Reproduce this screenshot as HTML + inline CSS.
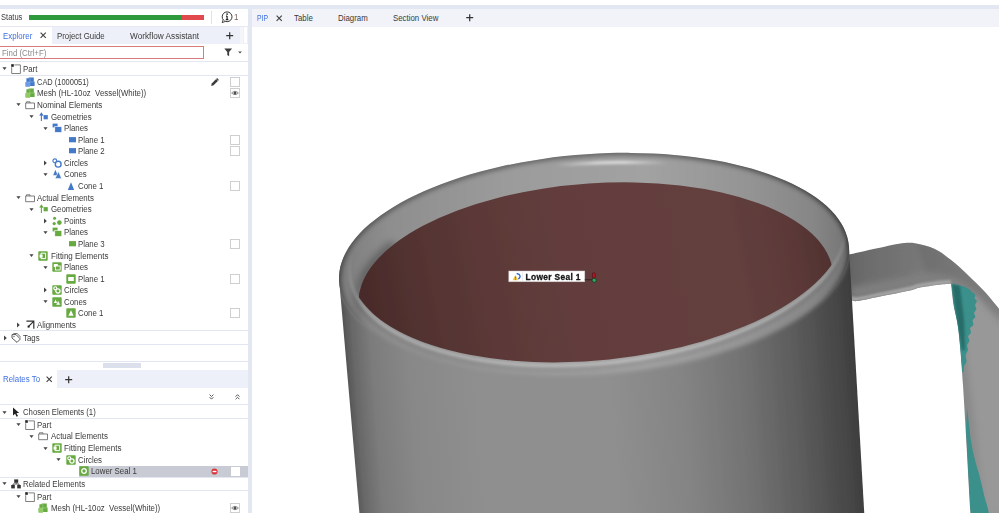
<!DOCTYPE html>
<html><head><meta charset="utf-8"><title>Inspect</title>
<style>
html,body{margin:0;padding:0;}
body{width:999px;height:513px;overflow:hidden;background:#fff;position:relative;
 font-family:"Liberation Sans",sans-serif;font-size:8.6px;color:#333;}
.abs{position:absolute;}
.t{position:absolute;white-space:nowrap;line-height:10.6px;height:10.6px;color:#3a3a3a;font-size:8.5px;transform:scaleX(0.925);transform-origin:0 50%;}
.hl{position:absolute;height:1.2px;background:#e2e6f0;}
.cb{position:absolute;width:8px;height:8px;border:1px solid #cfcfcf;background:#fff;box-sizing:content-box;}
svg{position:absolute;overflow:visible;}
#soft{filter:blur(0.35px);}
</style></head><body>
<svg width="999" height="513" viewBox="0 0 999 513" style="left:0;top:0">
<defs>
 <linearGradient id="gBody" gradientUnits="userSpaceOnUse" x1="340" y1="0" x2="862" y2="0" gradientTransform="matrix(1 0 0.072 1 -19.5 0)">
  <stop offset="0" stop-color="#565656"/><stop offset="0.015" stop-color="#686868"/>
  <stop offset="0.05" stop-color="#7c7c7c"/><stop offset="0.12" stop-color="#888"/>
  <stop offset="0.25" stop-color="#8f8f8f"/><stop offset="0.50" stop-color="#8f8f8f"/>
  <stop offset="0.64" stop-color="#848484"/><stop offset="0.76" stop-color="#727272"/>
  <stop offset="0.86" stop-color="#5c5c5c"/><stop offset="0.95" stop-color="#454545"/>
  <stop offset="1" stop-color="#363636"/>
 </linearGradient>
 <linearGradient id="gRim" gradientUnits="userSpaceOnUse" x1="338" y1="0" x2="850" y2="0">
  <stop offset="0" stop-color="#7c7c7c"/><stop offset="0.1" stop-color="#8e8e8e"/>
  <stop offset="0.35" stop-color="#9c9c9c"/><stop offset="0.6" stop-color="#a2a2a2"/>
  <stop offset="0.8" stop-color="#949494"/><stop offset="0.93" stop-color="#868686"/>
  <stop offset="1" stop-color="#747474"/>
 </linearGradient>
 <linearGradient id="gBrown" gradientUnits="userSpaceOnUse" x1="358" y1="300" x2="832" y2="240">
  <stop offset="0" stop-color="#482a29"/><stop offset="0.18" stop-color="#573534"/>
  <stop offset="0.45" stop-color="#633e3d"/><stop offset="0.8" stop-color="#633f3e"/>
  <stop offset="0.93" stop-color="#5a3837"/><stop offset="1" stop-color="#4f302f"/>
 </linearGradient>
 <linearGradient id="gHi" gradientUnits="userSpaceOnUse" x1="556" y1="0" x2="668" y2="0">
  <stop offset="0" stop-color="#fff" stop-opacity="0"/><stop offset="0.35" stop-color="#fff" stop-opacity="0.7"/>
  <stop offset="0.6" stop-color="#fff" stop-opacity="0.75"/><stop offset="1" stop-color="#fff" stop-opacity="0"/>
 </linearGradient>
 <linearGradient id="gHandle" gradientUnits="userSpaceOnUse" x1="850" y1="0" x2="999" y2="0">
  <stop offset="0" stop-color="#646464"/><stop offset="0.1" stop-color="#6c6c6c"/><stop offset="0.4" stop-color="#757575"/>
  <stop offset="0.7" stop-color="#868686"/><stop offset="1" stop-color="#949494"/>
 </linearGradient>
 <clipPath id="cBody"><path d="M339.0 278.5 L849.1 249.7 L864.3 514 L359.5 514 Z"/><path d="M849.0 246.8 C849.2 250.0 849.1 253.2 848.6 256.5 C848.2 259.7 847.5 262.9 846.4 266.2 C845.3 269.4 843.9 272.6 842.2 275.9 C840.5 279.1 838.5 282.3 836.1 285.4 C833.8 288.6 831.2 291.8 828.2 294.9 C825.3 298.0 822.1 301.1 818.5 304.1 C815.0 307.1 811.2 310.1 807.1 313.0 C803.1 315.9 798.7 318.7 794.1 321.5 C789.5 324.3 784.6 327.0 779.6 329.6 C774.5 332.2 769.1 334.7 763.6 337.2 C758.1 339.6 752.3 342.0 746.4 344.2 C740.4 346.5 734.3 348.6 727.9 350.6 C721.6 352.7 715.1 354.6 708.5 356.4 C701.9 358.2 695.1 359.9 688.2 361.5 C681.3 363.0 674.3 364.5 667.2 365.8 C660.1 367.1 652.9 368.3 645.6 369.3 C638.4 370.4 631.0 371.3 623.7 372.1 C616.3 372.9 608.9 373.5 601.5 374.0 C594.1 374.5 586.6 374.9 579.2 375.1 C571.8 375.3 564.4 375.4 557.1 375.3 C549.8 375.3 542.4 375.1 535.2 374.7 C528.0 374.4 520.9 373.9 513.8 373.3 C506.8 372.7 499.8 371.9 493.0 371.0 C486.2 370.1 479.5 369.1 473.0 367.9 C466.5 366.8 460.1 365.5 453.9 364.1 C447.7 362.6 441.7 361.1 435.9 359.4 C430.0 357.7 424.4 355.9 419.0 354.0 C413.6 352.1 408.4 350.1 403.5 348.0 C398.6 345.9 393.9 343.6 389.5 341.3 C385.0 339.0 380.8 336.5 377.0 334.0 C373.1 331.5 369.4 328.9 366.1 326.2 C362.8 323.5 359.7 320.8 357.0 317.9 C354.3 315.1 351.8 312.2 349.7 309.3 C347.6 306.3 345.7 303.3 344.2 300.2 C342.7 297.2 341.6 294.1 340.7 290.9 C339.8 287.8 339.3 284.6 339.1 281.4 C338.9 278.2 339.0 275.0 339.4 271.8 C339.8 268.5 340.6 265.3 341.7 262.1 C342.7 258.8 344.1 255.6 345.8 252.4 C347.5 249.2 349.6 245.9 351.9 242.8 C354.2 239.6 356.9 236.4 359.8 233.3 C362.7 230.2 366.0 227.2 369.5 224.1 C373.0 221.1 376.8 218.1 380.9 215.2 C385.0 212.3 389.3 209.5 393.9 206.7 C398.5 203.9 403.4 201.2 408.5 198.6 C413.6 196.0 418.9 193.5 424.4 191.0 C430.0 188.6 435.7 186.2 441.7 184.0 C447.6 181.8 453.8 179.6 460.1 177.6 C466.4 175.6 472.9 173.6 479.5 171.8 C486.1 170.0 492.9 168.3 499.8 166.8 C506.7 165.2 513.7 163.7 520.8 162.4 C527.9 161.1 535.2 159.9 542.4 158.9 C549.7 157.8 557.0 156.9 564.4 156.1 C571.7 155.4 579.2 154.7 586.6 154.2 C594.0 153.7 601.4 153.3 608.8 153.1 C616.2 152.9 623.6 152.8 631.0 152.9 C638.3 152.9 645.6 153.1 652.8 153.5 C660.0 153.8 667.2 154.3 674.2 154.9 C681.2 155.5 688.2 156.3 695.0 157.2 C701.8 158.1 708.5 159.1 715.0 160.3 C721.6 161.5 728.0 162.7 734.1 164.2 C740.3 165.6 746.4 167.1 752.2 168.8 C758.0 170.5 763.6 172.3 769.0 174.2 C774.4 176.1 779.6 178.1 784.5 180.2 C789.5 182.3 794.2 184.6 798.6 186.9 C803.0 189.2 807.2 191.7 811.1 194.2 C815.0 196.7 818.6 199.3 821.9 202.0 C825.3 204.7 828.3 207.4 831.0 210.3 C833.8 213.1 836.2 216.0 838.3 219.0 C840.5 221.9 842.3 224.9 843.8 228.0 C845.3 231.1 846.5 234.2 847.3 237.3 C848.2 240.4 848.7 243.6 849.0 246.8Z"/></clipPath>
 <clipPath id="cRim"><path d="M849.0 246.8 C849.2 250.0 849.1 253.2 848.6 256.5 C848.2 259.7 847.5 262.9 846.4 266.2 C845.3 269.4 843.9 272.6 842.2 275.9 C840.5 279.1 838.5 282.3 836.1 285.4 C833.8 288.6 831.2 291.8 828.2 294.9 C825.3 298.0 822.1 301.1 818.5 304.1 C815.0 307.1 811.2 310.1 807.1 313.0 C803.1 315.9 798.7 318.7 794.1 321.5 C789.5 324.3 784.6 327.0 779.6 329.6 C774.5 332.2 769.1 334.7 763.6 337.2 C758.1 339.6 752.3 342.0 746.4 344.2 C740.4 346.5 734.3 348.6 727.9 350.6 C721.6 352.7 715.1 354.6 708.5 356.4 C701.9 358.2 695.1 359.9 688.2 361.5 C681.3 363.0 674.3 364.5 667.2 365.8 C660.1 367.1 652.9 368.3 645.6 369.3 C638.4 370.4 631.0 371.3 623.7 372.1 C616.3 372.9 608.9 373.5 601.5 374.0 C594.1 374.5 586.6 374.9 579.2 375.1 C571.8 375.3 564.4 375.4 557.1 375.3 C549.8 375.3 542.4 375.1 535.2 374.7 C528.0 374.4 520.9 373.9 513.8 373.3 C506.8 372.7 499.8 371.9 493.0 371.0 C486.2 370.1 479.5 369.1 473.0 367.9 C466.5 366.8 460.1 365.5 453.9 364.1 C447.7 362.6 441.7 361.1 435.9 359.4 C430.0 357.7 424.4 355.9 419.0 354.0 C413.6 352.1 408.4 350.1 403.5 348.0 C398.6 345.9 393.9 343.6 389.5 341.3 C385.0 339.0 380.8 336.5 377.0 334.0 C373.1 331.5 369.4 328.9 366.1 326.2 C362.8 323.5 359.7 320.8 357.0 317.9 C354.3 315.1 351.8 312.2 349.7 309.3 C347.6 306.3 345.7 303.3 344.2 300.2 C342.7 297.2 341.6 294.1 340.7 290.9 C339.8 287.8 339.3 284.6 339.1 281.4 C338.9 278.2 339.0 275.0 339.4 271.8 C339.8 268.5 340.6 265.3 341.7 262.1 C342.7 258.8 344.1 255.6 345.8 252.4 C347.5 249.2 349.6 245.9 351.9 242.8 C354.2 239.6 356.9 236.4 359.8 233.3 C362.7 230.2 366.0 227.2 369.5 224.1 C373.0 221.1 376.8 218.1 380.9 215.2 C385.0 212.3 389.3 209.5 393.9 206.7 C398.5 203.9 403.4 201.2 408.5 198.6 C413.6 196.0 418.9 193.5 424.4 191.0 C430.0 188.6 435.7 186.2 441.7 184.0 C447.6 181.8 453.8 179.6 460.1 177.6 C466.4 175.6 472.9 173.6 479.5 171.8 C486.1 170.0 492.9 168.3 499.8 166.8 C506.7 165.2 513.7 163.7 520.8 162.4 C527.9 161.1 535.2 159.9 542.4 158.9 C549.7 157.8 557.0 156.9 564.4 156.1 C571.7 155.4 579.2 154.7 586.6 154.2 C594.0 153.7 601.4 153.3 608.8 153.1 C616.2 152.9 623.6 152.8 631.0 152.9 C638.3 152.9 645.6 153.1 652.8 153.5 C660.0 153.8 667.2 154.3 674.2 154.9 C681.2 155.5 688.2 156.3 695.0 157.2 C701.8 158.1 708.5 159.1 715.0 160.3 C721.6 161.5 728.0 162.7 734.1 164.2 C740.3 165.6 746.4 167.1 752.2 168.8 C758.0 170.5 763.6 172.3 769.0 174.2 C774.4 176.1 779.6 178.1 784.5 180.2 C789.5 182.3 794.2 184.6 798.6 186.9 C803.0 189.2 807.2 191.7 811.1 194.2 C815.0 196.7 818.6 199.3 821.9 202.0 C825.3 204.7 828.3 207.4 831.0 210.3 C833.8 213.1 836.2 216.0 838.3 219.0 C840.5 221.9 842.3 224.9 843.8 228.0 C845.3 231.1 846.5 234.2 847.3 237.3 C848.2 240.4 848.7 243.6 849.0 246.8Z"/></clipPath>
 <linearGradient id="gmBack" gradientUnits="userSpaceOnUse" x1="593.7" y1="259.1" x2="596.8" y2="314.0">
  <stop offset="0" stop-color="#fff"/><stop offset="1" stop-color="#000"/></linearGradient>
 <linearGradient id="gmFront" gradientUnits="userSpaceOnUse" x1="592.6" y1="239.1" x2="595.7" y2="294.1">
  <stop offset="0" stop-color="#000"/><stop offset="1" stop-color="#fff"/></linearGradient>
 <mask id="mBack" maskUnits="userSpaceOnUse" x="0" y="0" width="999" height="513"><rect width="999" height="513" fill="url(#gmBack)"/></mask>
 <mask id="mFront" maskUnits="userSpaceOnUse" x="0" y="0" width="999" height="513"><rect width="999" height="513" fill="url(#gmFront)"/></mask>
 <clipPath id="cBack"><path d="M329.0 300.5 L859.1 271.7 L1000 0 L0 0 Z"/></clipPath>
 <clipPath id="cFront"><path d="M329.0 294.5 L859.1 259.7 L1000 520 L0 520 Z"/></clipPath>
 <clipPath id="cIn"><ellipse cx="597.46" cy="247.23" rx="248.71" ry="112.87" transform="rotate(-5.92 597.46 247.23)" /></clipPath>
 <clipPath id="cHandle"><path d="M848.0 254.8 C850.8 254.2 859.7 252.2 865.0 251.0 C870.3 249.8 874.3 249.0 880.0 247.8 C885.7 246.6 893.2 244.6 899.0 243.8 C904.8 243.1 909.0 242.4 915.0 243.3 C921.0 244.2 928.8 246.2 934.8 249.0 C940.8 251.8 945.1 255.4 950.7 259.8 C956.3 264.2 963.0 270.4 968.6 275.7 C974.2 281.0 979.3 285.9 984.5 291.6 C989.7 297.3 997.4 306.9 1000.0 310.0 L1000 514 L970.5 514 C969.2 492.5 965.0 415.4 963.0 385.0 C961.0 354.6 960.1 344.9 958.6 331.6 C957.1 318.4 955.0 313.5 953.7 305.5 C952.4 297.5 951.5 287.3 951.0 283.7 C949.0 283.9 944.1 284.0 938.8 284.7 C933.5 285.4 923.8 286.7 919.0 287.7 C914.2 288.7 916.5 289.0 910.0 290.5 C903.5 292.0 888.8 294.8 880.0 296.5 C871.2 298.2 862.3 300.4 857.5 301.0 C852.7 301.6 852.1 300.0 851.0 299.8 L850 300 Z"/></clipPath>
 <filter id="b15" x="-10%" y="-300%" width="120%" height="700%"><feGaussianBlur stdDeviation="1.4"/></filter>
 <filter id="b03" x="-50%" y="-50%" width="200%" height="200%"><feGaussianBlur stdDeviation="0.3"/></filter>
 <filter id="b1" x="-50%" y="-50%" width="200%" height="200%"><feGaussianBlur stdDeviation="1"/></filter>
 <filter id="b2" x="-50%" y="-50%" width="200%" height="200%"><feGaussianBlur stdDeviation="2"/></filter>
 <filter id="b3" x="-50%" y="-50%" width="200%" height="200%"><feGaussianBlur stdDeviation="3.5"/></filter>
 <filter id="b05" x="-50%" y="-50%" width="200%" height="200%"><feGaussianBlur stdDeviation="0.5"/></filter>
</defs>
<g filter="url(#b05)">
<!-- handle -->
<path d="M848.0 254.8 C850.8 254.2 859.7 252.2 865.0 251.0 C870.3 249.8 874.3 249.0 880.0 247.8 C885.7 246.6 893.2 244.6 899.0 243.8 C904.8 243.1 909.0 242.4 915.0 243.3 C921.0 244.2 928.8 246.2 934.8 249.0 C940.8 251.8 945.1 255.4 950.7 259.8 C956.3 264.2 963.0 270.4 968.6 275.7 C974.2 281.0 979.3 285.9 984.5 291.6 C989.7 297.3 997.4 306.9 1000.0 310.0 L1000 514 L970.5 514 C969.2 492.5 965.0 415.4 963.0 385.0 C961.0 354.6 960.1 344.9 958.6 331.6 C957.1 318.4 955.0 313.5 953.7 305.5 C952.4 297.5 951.5 287.3 951.0 283.7 C949.0 283.9 944.1 284.0 938.8 284.7 C933.5 285.4 923.8 286.7 919.0 287.7 C914.2 288.7 916.5 289.0 910.0 290.5 C903.5 292.0 888.8 294.8 880.0 296.5 C871.2 298.2 862.3 300.4 857.5 301.0 C852.7 301.6 852.1 300.0 851.0 299.8 L850 300 Z" fill="url(#gHandle)"/>
<g clip-path="url(#cHandle)">
 <path d="M851.0 299.8 C852.1 300.0 852.7 301.6 857.5 301.0 C862.3 300.4 871.2 298.2 880.0 296.5 C888.8 294.8 903.5 292.0 910.0 290.5 C916.5 289.0 914.2 288.7 919.0 287.7 C923.8 286.7 933.5 285.4 938.8 284.7 C944.1 284.0 949.0 283.9 951.0 283.7" transform="translate(0,-9)" fill="none" stroke="#808080" stroke-width="11" filter="url(#b3)"/>
 <path d="M851.0 299.8 C852.1 300.0 852.7 301.6 857.5 301.0 C862.3 300.4 871.2 298.2 880.0 296.5 C888.8 294.8 903.5 292.0 910.0 290.5 C916.5 289.0 914.2 288.7 919.0 287.7 C923.8 286.7 933.5 285.4 938.8 284.7 C944.1 284.0 949.0 283.9 951.0 283.7" transform="translate(0,-2)" fill="none" stroke="#a4a4a4" stroke-width="4" filter="url(#b1)"/>
 <path d="M958 300 L975 420 L985 514 L1005 514 L1005 330 L975 292 Z" fill="#989898" filter="url(#b3)"/>
 <path d="M915 240 L940 246 L956 258 L972 274 L988 290 L1003 308 L1003 322 L982 300 L964 284 L948 275 L925 272 Z" fill="#666" fill-opacity="0.55" filter="url(#b3)"/>
 <path d="M951.5 284.0 L958.0 285.0 L964.5 286.5 L969.0 289.0 L972.0 292.0 L975.5 294.5 L974.5 298.0 L977.0 301.0 L975.0 305.0 L976.5 309.0 L974.0 313.0 L975.5 317.0 L972.5 320.0 L973.5 325.0 L970.0 328.0 L971.0 333.0 L968.0 336.0 L969.5 341.0 L967.0 345.0 L968.0 350.0 L965.5 355.0 L966.5 362.0 L964.0 366.0 L963.5 372.0 L962.0 372.0 L960.0 350.0 L957.5 325.0 L953.7 305.5Z" fill="#3a908c"/>
 <path d="M952 284 L960 286 L964 320 L965 350 L962 350 L957 320Z" fill="#235f5d" fill-opacity="0.75" filter="url(#b1)"/>
 <path d="M967.0 408.0 L968.5 420.0 L970.5 438.0 L973.0 452.0 L976.0 464.0 L979.0 474.0 L982.0 486.0 L984.5 497.0 L987.5 507.0 L989.0 514.0 L970.5 514.0 L969.0 490.0 L967.5 460.0 L966.0 430.0Z" fill="#3a908c"/>
</g>
<!-- body -->
<path d="M339.0 278.5 L849.1 249.7 L864.3 514 L359.5 514 Z" fill="url(#gBody)"/>
<path d="M849.0 246.8 C849.2 250.0 849.1 253.2 848.6 256.5 C848.2 259.7 847.5 262.9 846.4 266.2 C845.3 269.4 843.9 272.6 842.2 275.9 C840.5 279.1 838.5 282.3 836.1 285.4 C833.8 288.6 831.2 291.8 828.2 294.9 C825.3 298.0 822.1 301.1 818.5 304.1 C815.0 307.1 811.2 310.1 807.1 313.0 C803.1 315.9 798.7 318.7 794.1 321.5 C789.5 324.3 784.6 327.0 779.6 329.6 C774.5 332.2 769.1 334.7 763.6 337.2 C758.1 339.6 752.3 342.0 746.4 344.2 C740.4 346.5 734.3 348.6 727.9 350.6 C721.6 352.7 715.1 354.6 708.5 356.4 C701.9 358.2 695.1 359.9 688.2 361.5 C681.3 363.0 674.3 364.5 667.2 365.8 C660.1 367.1 652.9 368.3 645.6 369.3 C638.4 370.4 631.0 371.3 623.7 372.1 C616.3 372.9 608.9 373.5 601.5 374.0 C594.1 374.5 586.6 374.9 579.2 375.1 C571.8 375.3 564.4 375.4 557.1 375.3 C549.8 375.3 542.4 375.1 535.2 374.7 C528.0 374.4 520.9 373.9 513.8 373.3 C506.8 372.7 499.8 371.9 493.0 371.0 C486.2 370.1 479.5 369.1 473.0 367.9 C466.5 366.8 460.1 365.5 453.9 364.1 C447.7 362.6 441.7 361.1 435.9 359.4 C430.0 357.7 424.4 355.9 419.0 354.0 C413.6 352.1 408.4 350.1 403.5 348.0 C398.6 345.9 393.9 343.6 389.5 341.3 C385.0 339.0 380.8 336.5 377.0 334.0 C373.1 331.5 369.4 328.9 366.1 326.2 C362.8 323.5 359.7 320.8 357.0 317.9 C354.3 315.1 351.8 312.2 349.7 309.3 C347.6 306.3 345.7 303.3 344.2 300.2 C342.7 297.2 341.6 294.1 340.7 290.9 C339.8 287.8 339.3 284.6 339.1 281.4 C338.9 278.2 339.0 275.0 339.4 271.8 C339.8 268.5 340.6 265.3 341.7 262.1 C342.7 258.8 344.1 255.6 345.8 252.4 C347.5 249.2 349.6 245.9 351.9 242.8 C354.2 239.6 356.9 236.4 359.8 233.3 C362.7 230.2 366.0 227.2 369.5 224.1 C373.0 221.1 376.8 218.1 380.9 215.2 C385.0 212.3 389.3 209.5 393.9 206.7 C398.5 203.9 403.4 201.2 408.5 198.6 C413.6 196.0 418.9 193.5 424.4 191.0 C430.0 188.6 435.7 186.2 441.7 184.0 C447.6 181.8 453.8 179.6 460.1 177.6 C466.4 175.6 472.9 173.6 479.5 171.8 C486.1 170.0 492.9 168.3 499.8 166.8 C506.7 165.2 513.7 163.7 520.8 162.4 C527.9 161.1 535.2 159.9 542.4 158.9 C549.7 157.8 557.0 156.9 564.4 156.1 C571.7 155.4 579.2 154.7 586.6 154.2 C594.0 153.7 601.4 153.3 608.8 153.1 C616.2 152.9 623.6 152.8 631.0 152.9 C638.3 152.9 645.6 153.1 652.8 153.5 C660.0 153.8 667.2 154.3 674.2 154.9 C681.2 155.5 688.2 156.3 695.0 157.2 C701.8 158.1 708.5 159.1 715.0 160.3 C721.6 161.5 728.0 162.7 734.1 164.2 C740.3 165.6 746.4 167.1 752.2 168.8 C758.0 170.5 763.6 172.3 769.0 174.2 C774.4 176.1 779.6 178.1 784.5 180.2 C789.5 182.3 794.2 184.6 798.6 186.9 C803.0 189.2 807.2 191.7 811.1 194.2 C815.0 196.7 818.6 199.3 821.9 202.0 C825.3 204.7 828.3 207.4 831.0 210.3 C833.8 213.1 836.2 216.0 838.3 219.0 C840.5 221.9 842.3 224.9 843.8 228.0 C845.3 231.1 846.5 234.2 847.3 237.3 C848.2 240.4 848.7 243.6 849.0 246.8Z" fill="url(#gBody)"/>
<!-- rim ring -->
<g clip-path="url(#cBody)">
 <path d="M849.0 246.8 C849.2 250.0 849.1 253.2 848.6 256.5 C848.2 259.7 847.5 262.9 846.4 266.2 C845.3 269.4 843.9 272.6 842.2 275.9 C840.5 279.1 838.5 282.3 836.1 285.4 C833.8 288.6 831.2 291.8 828.2 294.9 C825.3 298.0 822.1 301.1 818.5 304.1 C815.0 307.1 811.2 310.1 807.1 313.0 C803.1 315.9 798.7 318.7 794.1 321.5 C789.5 324.3 784.6 327.0 779.6 329.6 C774.5 332.2 769.1 334.7 763.6 337.2 C758.1 339.6 752.3 342.0 746.4 344.2 C740.4 346.5 734.3 348.6 727.9 350.6 C721.6 352.7 715.1 354.6 708.5 356.4 C701.9 358.2 695.1 359.9 688.2 361.5 C681.3 363.0 674.3 364.5 667.2 365.8 C660.1 367.1 652.9 368.3 645.6 369.3 C638.4 370.4 631.0 371.3 623.7 372.1 C616.3 372.9 608.9 373.5 601.5 374.0 C594.1 374.5 586.6 374.9 579.2 375.1 C571.8 375.3 564.4 375.4 557.1 375.3 C549.8 375.3 542.4 375.1 535.2 374.7 C528.0 374.4 520.9 373.9 513.8 373.3 C506.8 372.7 499.8 371.9 493.0 371.0 C486.2 370.1 479.5 369.1 473.0 367.9 C466.5 366.8 460.1 365.5 453.9 364.1 C447.7 362.6 441.7 361.1 435.9 359.4 C430.0 357.7 424.4 355.9 419.0 354.0 C413.6 352.1 408.4 350.1 403.5 348.0 C398.6 345.9 393.9 343.6 389.5 341.3 C385.0 339.0 380.8 336.5 377.0 334.0 C373.1 331.5 369.4 328.9 366.1 326.2 C362.8 323.5 359.7 320.8 357.0 317.9 C354.3 315.1 351.8 312.2 349.7 309.3 C347.6 306.3 345.7 303.3 344.2 300.2 C342.7 297.2 341.6 294.1 340.7 290.9 C339.8 287.8 339.3 284.6 339.1 281.4 C338.9 278.2 339.0 275.0 339.4 271.8 C339.8 268.5 340.6 265.3 341.7 262.1 C342.7 258.8 344.1 255.6 345.8 252.4 C347.5 249.2 349.6 245.9 351.9 242.8 C354.2 239.6 356.9 236.4 359.8 233.3 C362.7 230.2 366.0 227.2 369.5 224.1 C373.0 221.1 376.8 218.1 380.9 215.2 C385.0 212.3 389.3 209.5 393.9 206.7 C398.5 203.9 403.4 201.2 408.5 198.6 C413.6 196.0 418.9 193.5 424.4 191.0 C430.0 188.6 435.7 186.2 441.7 184.0 C447.6 181.8 453.8 179.6 460.1 177.6 C466.4 175.6 472.9 173.6 479.5 171.8 C486.1 170.0 492.9 168.3 499.8 166.8 C506.7 165.2 513.7 163.7 520.8 162.4 C527.9 161.1 535.2 159.9 542.4 158.9 C549.7 157.8 557.0 156.9 564.4 156.1 C571.7 155.4 579.2 154.7 586.6 154.2 C594.0 153.7 601.4 153.3 608.8 153.1 C616.2 152.9 623.6 152.8 631.0 152.9 C638.3 152.9 645.6 153.1 652.8 153.5 C660.0 153.8 667.2 154.3 674.2 154.9 C681.2 155.5 688.2 156.3 695.0 157.2 C701.8 158.1 708.5 159.1 715.0 160.3 C721.6 161.5 728.0 162.7 734.1 164.2 C740.3 165.6 746.4 167.1 752.2 168.8 C758.0 170.5 763.6 172.3 769.0 174.2 C774.4 176.1 779.6 178.1 784.5 180.2 C789.5 182.3 794.2 184.6 798.6 186.9 C803.0 189.2 807.2 191.7 811.1 194.2 C815.0 196.7 818.6 199.3 821.9 202.0 C825.3 204.7 828.3 207.4 831.0 210.3 C833.8 213.1 836.2 216.0 838.3 219.0 C840.5 221.9 842.3 224.9 843.8 228.0 C845.3 231.1 846.5 234.2 847.3 237.3 C848.2 240.4 848.7 243.6 849.0 246.8Z" fill="url(#gRim)" filter="url(#b2)"/>
 <g clip-path="url(#cRim)">
  <g mask="url(#mBack)">
   <path d="M849.0 246.8 C849.2 250.0 849.1 253.2 848.6 256.5 C848.2 259.7 847.5 262.9 846.4 266.2 C845.3 269.4 843.9 272.6 842.2 275.9 C840.5 279.1 838.5 282.3 836.1 285.4 C833.8 288.6 831.2 291.8 828.2 294.9 C825.3 298.0 822.1 301.1 818.5 304.1 C815.0 307.1 811.2 310.1 807.1 313.0 C803.1 315.9 798.7 318.7 794.1 321.5 C789.5 324.3 784.6 327.0 779.6 329.6 C774.5 332.2 769.1 334.7 763.6 337.2 C758.1 339.6 752.3 342.0 746.4 344.2 C740.4 346.5 734.3 348.6 727.9 350.6 C721.6 352.7 715.1 354.6 708.5 356.4 C701.9 358.2 695.1 359.9 688.2 361.5 C681.3 363.0 674.3 364.5 667.2 365.8 C660.1 367.1 652.9 368.3 645.6 369.3 C638.4 370.4 631.0 371.3 623.7 372.1 C616.3 372.9 608.9 373.5 601.5 374.0 C594.1 374.5 586.6 374.9 579.2 375.1 C571.8 375.3 564.4 375.4 557.1 375.3 C549.8 375.3 542.4 375.1 535.2 374.7 C528.0 374.4 520.9 373.9 513.8 373.3 C506.8 372.7 499.8 371.9 493.0 371.0 C486.2 370.1 479.5 369.1 473.0 367.9 C466.5 366.8 460.1 365.5 453.9 364.1 C447.7 362.6 441.7 361.1 435.9 359.4 C430.0 357.7 424.4 355.9 419.0 354.0 C413.6 352.1 408.4 350.1 403.5 348.0 C398.6 345.9 393.9 343.6 389.5 341.3 C385.0 339.0 380.8 336.5 377.0 334.0 C373.1 331.5 369.4 328.9 366.1 326.2 C362.8 323.5 359.7 320.8 357.0 317.9 C354.3 315.1 351.8 312.2 349.7 309.3 C347.6 306.3 345.7 303.3 344.2 300.2 C342.7 297.2 341.6 294.1 340.7 290.9 C339.8 287.8 339.3 284.6 339.1 281.4 C338.9 278.2 339.0 275.0 339.4 271.8 C339.8 268.5 340.6 265.3 341.7 262.1 C342.7 258.8 344.1 255.6 345.8 252.4 C347.5 249.2 349.6 245.9 351.9 242.8 C354.2 239.6 356.9 236.4 359.8 233.3 C362.7 230.2 366.0 227.2 369.5 224.1 C373.0 221.1 376.8 218.1 380.9 215.2 C385.0 212.3 389.3 209.5 393.9 206.7 C398.5 203.9 403.4 201.2 408.5 198.6 C413.6 196.0 418.9 193.5 424.4 191.0 C430.0 188.6 435.7 186.2 441.7 184.0 C447.6 181.8 453.8 179.6 460.1 177.6 C466.4 175.6 472.9 173.6 479.5 171.8 C486.1 170.0 492.9 168.3 499.8 166.8 C506.7 165.2 513.7 163.7 520.8 162.4 C527.9 161.1 535.2 159.9 542.4 158.9 C549.7 157.8 557.0 156.9 564.4 156.1 C571.7 155.4 579.2 154.7 586.6 154.2 C594.0 153.7 601.4 153.3 608.8 153.1 C616.2 152.9 623.6 152.8 631.0 152.9 C638.3 152.9 645.6 153.1 652.8 153.5 C660.0 153.8 667.2 154.3 674.2 154.9 C681.2 155.5 688.2 156.3 695.0 157.2 C701.8 158.1 708.5 159.1 715.0 160.3 C721.6 161.5 728.0 162.7 734.1 164.2 C740.3 165.6 746.4 167.1 752.2 168.8 C758.0 170.5 763.6 172.3 769.0 174.2 C774.4 176.1 779.6 178.1 784.5 180.2 C789.5 182.3 794.2 184.6 798.6 186.9 C803.0 189.2 807.2 191.7 811.1 194.2 C815.0 196.7 818.6 199.3 821.9 202.0 C825.3 204.7 828.3 207.4 831.0 210.3 C833.8 213.1 836.2 216.0 838.3 219.0 C840.5 221.9 842.3 224.9 843.8 228.0 C845.3 231.1 846.5 234.2 847.3 237.3 C848.2 240.4 848.7 243.6 849.0 246.8Z" fill="none" stroke="#000" stroke-opacity="0.30" stroke-width="6" filter="url(#b2)"/>
   <path d="M361.8 319.8 C361.4 318.6 360.1 315.0 359.6 312.6 C359.0 310.1 358.7 307.7 358.5 305.2 C358.4 302.8 358.4 300.3 358.6 297.8 C358.8 295.3 359.2 292.9 359.8 290.4 C360.4 287.9 361.2 285.4 362.2 282.9 C363.2 280.4 364.4 277.9 365.7 275.5 C367.1 273.0 368.7 270.5 370.4 268.1 C372.1 265.7 374.0 263.2 376.1 260.8 C378.2 258.4 380.5 256.1 382.9 253.7 C385.4 251.4 389.5 247.9 390.8 246.8" fill="none" stroke="#000" stroke-opacity="0.28" stroke-width="10" stroke-linecap="round" filter="url(#b3)"/>
  </g>
 </g>
 <g mask="url(#mFront)">
  <path d="M844.8 229.6 C845.2 232.8 845.2 236.1 844.9 239.5 C844.6 242.8 844.0 246.1 843.1 249.5 C842.2 252.8 841.0 256.2 839.4 259.5 C837.9 262.9 836.0 266.2 833.9 269.5 C831.8 272.8 829.3 276.2 826.6 279.4 C823.9 282.7 820.8 286.0 817.5 289.1 C814.2 292.3 810.6 295.5 806.8 298.6 C802.9 301.7 798.8 304.8 794.4 307.7 C790.1 310.7 785.5 313.6 780.6 316.5 C775.8 319.3 770.7 322.1 765.4 324.7 C760.1 327.4 754.6 330.0 748.9 332.5 C743.2 335.0 737.3 337.4 731.2 339.6 C725.2 341.9 718.9 344.1 712.6 346.1 C706.2 348.2 699.6 350.1 693.0 352.0 C686.4 353.8 679.6 355.5 672.7 357.0 C665.9 358.6 658.9 360.0 651.9 361.3 C644.9 362.6 637.7 363.8 630.6 364.8 C623.5 365.9 616.3 366.8 609.1 367.5 C601.9 368.2 594.7 368.8 587.5 369.3 C580.3 369.8 573.1 370.1 566.0 370.2 C558.8 370.4 551.7 370.4 544.7 370.3 C537.6 370.2 530.7 369.9 523.8 369.5 C516.9 369.1 510.1 368.5 503.5 367.8 C496.8 367.1 490.2 366.3 483.8 365.3 C477.5 364.3 471.2 363.2 465.1 361.9 C459.0 360.6 453.1 359.2 447.4 357.7 C441.6 356.2 436.1 354.5 430.8 352.8 C425.4 351.0 420.3 349.1 415.4 347.0 C410.6 345.0 405.9 342.9 401.5 340.6 C397.1 338.4 392.9 336.0 389.0 333.6 C385.2 331.1 381.5 328.6 378.2 325.9 C374.8 323.3 371.8 320.5 369.0 317.7 C366.2 314.9 363.7 312.0 361.5 309.1 C359.3 306.1 357.4 303.1 355.9 300.0 C354.3 296.9 353.0 293.8 352.0 290.6 C351.1 287.4 350.4 284.1 350.1 280.9 C349.7 277.6 349.7 274.3 350.0 271.0 C350.3 267.7 350.9 264.3 351.8 261.0 C352.7 257.7 354.0 254.3 355.5 251.0 C357.0 247.6 358.9 244.3 361.0 240.9 C363.2 237.6 365.6 234.3 368.3 231.0 C371.1 227.8 374.1 224.5 377.4 221.3 C380.7 218.1 384.3 214.9 388.1 211.8 C392.0 208.7 396.1 205.7 400.5 202.7 C404.8 199.7 409.5 196.8 414.3 194.0 C419.1 191.1 424.2 188.4 429.5 185.7 C434.8 183.0 440.3 180.5 446.0 178.0 C451.7 175.5 457.6 173.1 463.7 170.8 C469.7 168.6 476.0 166.4 482.4 164.3 C488.7 162.3 495.3 160.3 501.9 158.5 C508.5 156.7 515.3 155.0 522.2 153.4 C529.0 151.9 536.0 150.4 543.0 149.1 C550.1 147.8 557.2 146.7 564.3 145.6 C571.4 144.6 578.6 143.7 585.8 143.0 C593.0 142.2 600.2 141.6 607.4 141.2 C614.6 140.7 621.8 140.4 629.0 140.2 C636.1 140.0 643.2 140.0 650.2 140.1 C657.3 140.3 664.3 140.5 671.1 141.0 C678.0 141.4 684.8 141.9 691.5 142.6 C698.1 143.3 704.7 144.2 711.1 145.2 C717.5 146.2 723.7 147.3 729.8 148.6 C735.9 149.8 741.8 151.2 747.6 152.7 C753.3 154.3 758.8 155.9 764.2 157.7 C769.5 159.5 774.6 161.4 779.5 163.4 C784.4 165.4 789.0 167.6 793.4 169.8 C797.8 172.1 802.0 174.4 805.9 176.9 C809.8 179.3 813.4 181.9 816.7 184.5 C820.1 187.2 823.2 189.9 825.9 192.7 C828.7 195.5 831.2 198.4 833.4 201.4 C835.6 204.4 837.5 207.4 839.1 210.5 C840.6 213.6 841.9 216.7 842.9 219.9 C843.9 223.1 844.5 226.3 844.8 229.6Z" fill="none" stroke="#000" stroke-opacity="0.05" stroke-width="5" filter="url(#b1)"/>
  <path d="M844.8 224.8 C845.2 228.0 845.2 231.3 844.9 234.7 C844.6 238.0 844.0 241.3 843.1 244.7 C842.2 248.0 841.0 251.4 839.4 254.7 C837.9 258.1 836.0 261.4 833.9 264.7 C831.8 268.0 829.3 271.4 826.6 274.6 C823.9 277.9 820.8 281.2 817.5 284.3 C814.2 287.5 810.6 290.7 806.8 293.8 C802.9 296.9 798.8 300.0 794.4 302.9 C790.1 305.9 785.5 308.8 780.6 311.7 C775.8 314.5 770.7 317.3 765.4 319.9 C760.1 322.6 754.6 325.2 748.9 327.7 C743.2 330.2 737.3 332.6 731.2 334.8 C725.2 337.1 718.9 339.3 712.6 341.3 C706.2 343.4 699.6 345.3 693.0 347.2 C686.4 349.0 679.6 350.7 672.7 352.2 C665.9 353.8 658.9 355.2 651.9 356.5 C644.9 357.8 637.7 359.0 630.6 360.0 C623.5 361.1 616.3 362.0 609.1 362.7 C601.9 363.4 594.7 364.0 587.5 364.5 C580.3 365.0 573.1 365.3 566.0 365.4 C558.8 365.6 551.7 365.6 544.7 365.5 C537.6 365.4 530.7 365.1 523.8 364.7 C516.9 364.3 510.1 363.7 503.5 363.0 C496.8 362.3 490.2 361.5 483.8 360.5 C477.5 359.5 471.2 358.4 465.1 357.1 C459.0 355.8 453.1 354.4 447.4 352.9 C441.6 351.4 436.1 349.7 430.8 348.0 C425.4 346.2 420.3 344.3 415.4 342.2 C410.6 340.2 405.9 338.1 401.5 335.8 C397.1 333.6 392.9 331.2 389.0 328.8 C385.2 326.3 381.5 323.8 378.2 321.1 C374.8 318.5 371.8 315.7 369.0 312.9 C366.2 310.1 363.7 307.2 361.5 304.3 C359.3 301.3 357.4 298.3 355.9 295.2 C354.3 292.1 353.0 289.0 352.0 285.8 C351.1 282.6 350.4 279.3 350.1 276.1 C349.7 272.8 349.7 269.5 350.0 266.2 C350.3 262.9 350.9 259.5 351.8 256.2 C352.7 252.9 354.0 249.5 355.5 246.2 C357.0 242.8 358.9 239.5 361.0 236.1 C363.2 232.8 365.6 229.5 368.3 226.2 C371.1 223.0 374.1 219.7 377.4 216.5 C380.7 213.3 384.3 210.1 388.1 207.0 C392.0 203.9 396.1 200.9 400.5 197.9 C404.8 194.9 409.5 192.0 414.3 189.2 C419.1 186.3 424.2 183.6 429.5 180.9 C434.8 178.2 440.3 175.7 446.0 173.2 C451.7 170.7 457.6 168.3 463.7 166.0 C469.7 163.8 476.0 161.6 482.4 159.5 C488.7 157.5 495.3 155.5 501.9 153.7 C508.5 151.9 515.3 150.2 522.2 148.6 C529.0 147.1 536.0 145.6 543.0 144.3 C550.1 143.0 557.2 141.9 564.3 140.8 C571.4 139.8 578.6 138.9 585.8 138.2 C593.0 137.4 600.2 136.8 607.4 136.4 C614.6 135.9 621.8 135.6 629.0 135.4 C636.1 135.2 643.2 135.2 650.2 135.3 C657.3 135.5 664.3 135.7 671.1 136.2 C678.0 136.6 684.8 137.1 691.5 137.8 C698.1 138.5 704.7 139.4 711.1 140.4 C717.5 141.4 723.7 142.5 729.8 143.8 C735.9 145.0 741.8 146.4 747.6 147.9 C753.3 149.5 758.8 151.1 764.2 152.9 C769.5 154.7 774.6 156.6 779.5 158.6 C784.4 160.6 789.0 162.8 793.4 165.0 C797.8 167.3 802.0 169.6 805.9 172.1 C809.8 174.5 813.4 177.1 816.7 179.7 C820.1 182.4 823.2 185.1 825.9 187.9 C828.7 190.7 831.2 193.6 833.4 196.6 C835.6 199.6 837.5 202.6 839.1 205.7 C840.6 208.8 841.9 211.9 842.9 215.1 C843.9 218.3 844.5 221.5 844.8 224.8Z" fill="none" stroke="#fff" stroke-opacity="0.22" stroke-width="3.4" filter="url(#b1)"/>
 </g>
 <path d="M558.0 165.0 C563.3 164.7 579.7 163.6 590.0 163.2 C600.3 162.8 610.8 162.5 620.0 162.4 C629.2 162.3 637.3 162.3 645.0 162.5 C652.7 162.7 662.5 163.2 666.0 163.4" fill="none" stroke="url(#gHi)" stroke-width="2.6" stroke-linecap="round" filter="url(#b15)"/>
</g>
<!-- brown seal plane: disc ellipse clipped by inner-rim ellipse -->
<g clip-path="url(#cIn)">
 <ellipse cx="595.78" cy="289.27" rx="237.80" ry="105.99" transform="rotate(-3.85 595.78 289.27)" fill="url(#gBrown)"/>
</g>
</g>
<!-- label -->
<g filter="url(#b03)">
 <rect x="508.8" y="271" width="76" height="10.8" fill="#fff" stroke="#c9c3c3" stroke-width="0.5"/>
 <path d="M522.6 271.6V281.2" stroke="#e2e2e2" stroke-width="0.7"/>
 <path d="M516.6 273.9 A2.6 2.6 0 1 1 518.2 278.9" fill="none" stroke="#2f6bd0" stroke-width="1.4"/>
 <path d="M512.6 280.2 L515.4 274.9 L518.2 280.2Z" fill="#f3c63a"/>
 <path d="M515.4 276.6V278.6 M515.4 279.2V279.8" stroke="#5a4a10" stroke-width="0.7"/>
 <text x="525.5" y="279.7" font-family="Liberation Sans, sans-serif" font-weight="bold" font-size="8.4" fill="#151515" stroke="#151515" stroke-width="0.3" textLength="55" lengthAdjust="spacing">Lower Seal 1</text>
 <path d="M584.8 279.8 H592" stroke="#2a2020" stroke-width="0.9"/>
 <rect x="592.4" y="272.8" width="2.9" height="5.2" rx="1" fill="#b8141f" stroke="#3a1515" stroke-width="0.6"/>
 <circle cx="594.2" cy="280.3" r="2.1" fill="#2fa65c" stroke="#1c3323" stroke-width="0.8"/>
</g>
</svg>
<div id="soft">
<div class="abs" style="left:0;top:5.3px;width:999px;height:3.6px;background:#e3e7f2"></div>
<div class="abs" style="left:248px;top:5.3px;width:3.7px;height:508px;background:#e3e7f2"></div>
<div class="abs" style="left:251.7px;top:9px;width:748px;height:17.6px;background:#f1f3f9"></div>
<div class="hl" style="left:0;top:26px;width:248px;background:#e6e9f2"></div>
<div class="abs" style="left:0;top:26.6px;width:248px;height:17px;background:#edf0f8"></div>
<div class="abs" style="left:0;top:26.6px;width:51.5px;height:17px;background:#fff"></div>
<div class="abs" style="left:239.5px;top:26.6px;width:3.6px;height:17px;background:#f4f6fa"></div>
<div class="abs" style="left:244.2px;top:27.4px;width:3px;height:15.6px;background:#fff"></div>
<div class="t" style="left:0.6px;top:12.2px;transform:scaleX(0.888)">Status</div>
<div class="abs" style="left:29px;top:15px;width:152.5px;height:4.7px;background:#2f9a3c"></div>
<div class="abs" style="left:181.5px;top:15px;width:22.5px;height:4.7px;background:#e2494d"></div>
<div class="abs" style="left:211px;top:11px;width:1px;height:12.5px;background:#dde1ec"></div>
<svg style="left:221.0px;top:10.6px" width="13" height="13" viewBox="0 0 13 13"><circle cx="6.1" cy="5.8" r="4.9" fill="#fff" stroke="#333" stroke-width="1"/><path d="M2.2 8.8L1.2 11.6L4.6 10.3" fill="#fff" stroke="#333" stroke-width="0.9"/><path d="M6.1 5V8.6 M4.8 8.7H7.4 M5 5.1H6.1" stroke="#222" stroke-width="1.2" fill="none"/><circle cx="6.1" cy="3.1" r="0.85" fill="#222"/></svg>
<div class="t" style="left:234.3px;top:12px;color:#7a5a55">1</div>
<div class="t" style="left:2.8px;top:30.8px;color:#3f6fe0">Explorer</div>
<svg style="left:39.6px;top:32.3px" width="6.4" height="6.4" viewBox="0 0 6.4 6.4"><path d="M0.6 0.6L5.8 5.8M5.8 0.6L0.6 5.8" stroke="#444" stroke-width="1.15"/></svg>
<div class="t" style="left:57.2px;top:30.8px">Project Guide</div>
<div class="t" style="left:130px;top:30.8px;transform:scaleX(0.970)">Workflow Assistant</div>
<svg style="left:226.0px;top:31.5px" width="7.4" height="7.4" viewBox="0 0 7.4 7.4"><path d="M3.7 0.2V7.2M0.2 3.7H7.2" stroke="#333" stroke-width="1.2"/></svg>
<div class="abs" style="left:-1px;top:46px;width:203.4px;height:10.8px;border:1px solid #d77c7c;background:#fff"></div>
<div class="t" style="left:2px;top:47.6px;color:#8a8a8a">Find (Ctrl+F)</div>
<svg style="left:224.3px;top:47.9px" width="8.4" height="8.6" viewBox="0 0 8 8.4"><path d="M0.2 0.4H7.8L4.9 4V8L3.1 6.8V4Z" fill="#3c3c3c"/></svg>
<svg style="left:238.3px;top:50.8px" width="4" height="3" viewBox="0 0 4 3"><path d="M0.2 0.4H3.8L2 2.6Z" fill="#444"/></svg>
<div class="hl" style="left:0;top:61.2px;width:248px"></div>
<svg style="left:2.0px;top:66.4px" width="5" height="5" viewBox="0 0 5 5"><path d="M0.4 1.2H4.6L2.5 4Z" fill="#444"/></svg>
<svg style="left:11.2px;top:64.0px" width="10" height="10" viewBox="0 0 10 10"><path d="M3.4 0.9H9.4V9.5H0.7V3.2" fill="none" stroke="#6a6a6a" stroke-width="0.85"/><rect x="0.2" y="0.2" width="2.6" height="2.6" fill="#222"/></svg>
<div class="t" style="left:23.3px;top:64.0px">Part</div>
<div class="hl" style="left:0;top:75.2px;width:248px"></div>
<svg style="left:24.8px;top:76.8px" width="10" height="10" viewBox="0 0 10 10"><path d="M3.6 0.4H8.8V4.6H9.6V9H5V9.4H0.6V5H1.4V1.2H3.6Z" fill="#4379c8"/><rect x="0.6" y="5" width="4.2" height="4.4" fill="#6a9be6"/><path d="M4.9 1V9 M1.4 5H9.2" stroke="#9dbdf0" stroke-width="0.45" fill="none"/></svg>
<div class="t" style="left:36.9px;top:76.8px;transform:scaleX(0.877)">CAD (1000051)</div>
<div class="cb" style="left:230px;top:76.8px"></div>
<svg style="left:24.8px;top:88.4px" width="10" height="10" viewBox="0 0 10 10"><path d="M3.6 0.4H8.8V4.6H9.6V9H5V9.4H0.6V5H1.4V1.2H3.6Z" fill="#68aa42"/><rect x="0.6" y="5" width="4.2" height="4.4" fill="#8fcb62"/><path d="M4.9 1V9 M1.4 5H9.2" stroke="#b5e090" stroke-width="0.45" fill="none"/></svg>
<div class="t" style="left:36.9px;top:88.4px">Mesh (HL-10oz&nbsp; Vessel(White))</div>
<div class="cb" style="left:230px;top:88.4px"></div>
<svg style="left:231.2px;top:89.4px" width="8" height="8" viewBox="0 0 8 8"><path d="M0.6 4Q4 0.6 7.4 4Q4 7.4 0.6 4Z" fill="#fff" stroke="#777" stroke-width="0.8"/><circle cx="4" cy="4" r="1.5" fill="#505050"/></svg>
<svg style="left:15.6px;top:102.4px" width="5" height="5" viewBox="0 0 5 5"><path d="M0.4 1.2H4.6L2.5 4Z" fill="#444"/></svg>
<svg style="left:24.8px;top:100.0px" width="10" height="10" viewBox="0 0 10 10"><path d="M0.7 3V8.7H9.5V3H5V1.8H1.4V3Z M1.4 3H5" fill="none" stroke="#666" stroke-width="0.85"/></svg>
<div class="t" style="left:36.9px;top:100.0px;transform:scaleX(0.948)">Nominal Elements</div>
<svg style="left:29.2px;top:113.9px" width="5" height="5" viewBox="0 0 5 5"><path d="M0.4 1.2H4.6L2.5 4Z" fill="#444"/></svg>
<svg style="left:38.4px;top:111.5px" width="10" height="10" viewBox="0 0 10 10"><rect x="5.6" y="3.1" width="4.2" height="4.2" fill="#4379c8"/><path d="M3.4 9V1.8 M1.8 3.6L3.4 1.3L5 3.6" fill="none" stroke="#4379c8" stroke-width="1.1"/></svg>
<div class="t" style="left:50.5px;top:111.5px">Geometries</div>
<svg style="left:42.8px;top:125.5px" width="5" height="5" viewBox="0 0 5 5"><path d="M0.4 1.2H4.6L2.5 4Z" fill="#444"/></svg>
<svg style="left:52.0px;top:123.1px" width="10" height="10" viewBox="0 0 10 10"><rect x="0.6" y="0.6" width="5" height="3.8" fill="#4379c8"/><rect x="2.8" y="3.6" width="7" height="5.8" fill="#4379c8" stroke="#fff" stroke-width="0.6"/></svg>
<div class="t" style="left:64.1px;top:123.1px">Planes</div>
<svg style="left:65.6px;top:134.7px" width="10" height="10" viewBox="0 0 10 10"><rect x="3" y="2.1" width="7" height="5.2" fill="#4379c8"/></svg>
<div class="t" style="left:77.7px;top:134.7px">Plane 1</div>
<div class="cb" style="left:230px;top:134.7px"></div>
<svg style="left:65.6px;top:146.3px" width="10" height="10" viewBox="0 0 10 10"><rect x="3" y="2.1" width="7" height="5.2" fill="#4379c8"/></svg>
<div class="t" style="left:77.7px;top:146.3px">Plane 2</div>
<div class="cb" style="left:230px;top:146.3px"></div>
<svg style="left:43.3px;top:160.1px" width="5" height="6" viewBox="0 0 5 6"><path d="M1 0.6L3.8 3L1 5.4Z" fill="#444"/></svg>
<svg style="left:52.0px;top:157.9px" width="10" height="10" viewBox="0 0 10 10"><circle cx="2.8" cy="2.8" r="1.9" fill="none" stroke="#4379c8" stroke-width="1.1"/><circle cx="6.2" cy="6.2" r="2.9" fill="#fff" stroke="#4379c8" stroke-width="1.4"/></svg>
<div class="t" style="left:64.1px;top:157.9px">Circles</div>
<svg style="left:42.8px;top:171.8px" width="5" height="5" viewBox="0 0 5 5"><path d="M0.4 1.2H4.6L2.5 4Z" fill="#444"/></svg>
<svg style="left:52.0px;top:169.4px" width="10" height="10" viewBox="0 0 10 10"><path d="M3.4 0.8L5.6 6.2H1.2Z" fill="#4379c8"/><path d="M6.4 2.6L9.6 9.4H3.2Z" fill="#4379c8" stroke="#fff" stroke-width="0.5"/></svg>
<div class="t" style="left:64.1px;top:169.4px">Cones</div>
<svg style="left:65.6px;top:181.0px" width="10" height="10" viewBox="0 0 10 10"><path d="M5 1.2L8.2 9H1.8Z" fill="#4379c8"/></svg>
<div class="t" style="left:77.7px;top:181.0px">Cone 1</div>
<div class="cb" style="left:230px;top:181.0px"></div>
<svg style="left:15.6px;top:195.0px" width="5" height="5" viewBox="0 0 5 5"><path d="M0.4 1.2H4.6L2.5 4Z" fill="#444"/></svg>
<svg style="left:24.8px;top:192.6px" width="10" height="10" viewBox="0 0 10 10"><path d="M0.7 3V8.7H9.5V3H5V1.8H1.4V3Z M1.4 3H5" fill="none" stroke="#666" stroke-width="0.85"/></svg>
<div class="t" style="left:36.9px;top:192.6px">Actual Elements</div>
<svg style="left:29.2px;top:206.6px" width="5" height="5" viewBox="0 0 5 5"><path d="M0.4 1.2H4.6L2.5 4Z" fill="#444"/></svg>
<svg style="left:38.4px;top:204.2px" width="10" height="10" viewBox="0 0 10 10"><rect x="5.6" y="3.1" width="4.2" height="4.2" fill="#68aa42"/><path d="M3.4 9V1.8 M1.8 3.6L3.4 1.3L5 3.6" fill="none" stroke="#68aa42" stroke-width="1.1"/></svg>
<div class="t" style="left:50.5px;top:204.2px">Geometries</div>
<svg style="left:43.3px;top:218.0px" width="5" height="6" viewBox="0 0 5 6"><path d="M1 0.6L3.8 3L1 5.4Z" fill="#444"/></svg>
<svg style="left:52.0px;top:215.8px" width="10" height="10" viewBox="0 0 10 10"><circle cx="2.6" cy="2.2" r="1.5" fill="#68aa42"/><circle cx="2.2" cy="7.6" r="1.6" fill="#68aa42"/><circle cx="7.4" cy="6.6" r="2.3" fill="#68aa42"/></svg>
<div class="t" style="left:64.1px;top:215.8px">Points</div>
<svg style="left:42.8px;top:229.7px" width="5" height="5" viewBox="0 0 5 5"><path d="M0.4 1.2H4.6L2.5 4Z" fill="#444"/></svg>
<svg style="left:52.0px;top:227.3px" width="10" height="10" viewBox="0 0 10 10"><rect x="0.6" y="0.6" width="5" height="3.8" fill="#68aa42"/><rect x="2.8" y="3.6" width="7" height="5.8" fill="#68aa42" stroke="#fff" stroke-width="0.6"/></svg>
<div class="t" style="left:64.1px;top:227.3px">Planes</div>
<svg style="left:65.6px;top:238.9px" width="10" height="10" viewBox="0 0 10 10"><rect x="3" y="2.1" width="7" height="5.2" fill="#68aa42"/></svg>
<div class="t" style="left:77.7px;top:238.9px">Plane 3</div>
<div class="cb" style="left:230px;top:238.9px"></div>
<svg style="left:29.2px;top:252.9px" width="5" height="5" viewBox="0 0 5 5"><path d="M0.4 1.2H4.6L2.5 4Z" fill="#444"/></svg>
<svg style="left:38.4px;top:250.5px" width="10" height="10" viewBox="0 0 10 10"><rect x="0.3" y="0.3" width="9.4" height="9.4" rx="0.8" fill="#68aa42"/><path d="M3 2.2H7.6V7.6H3Z" fill="none" stroke="#fff" stroke-width="1"/><rect x="1.6" y="3.6" width="3" height="3" fill="#fff"/></svg>
<div class="t" style="left:50.5px;top:250.5px;transform:scaleX(0.942)">Fitting Elements</div>
<svg style="left:42.8px;top:264.5px" width="5" height="5" viewBox="0 0 5 5"><path d="M0.4 1.2H4.6L2.5 4Z" fill="#444"/></svg>
<svg style="left:52.0px;top:262.1px" width="10" height="10" viewBox="0 0 10 10"><rect x="0.3" y="0.3" width="9.4" height="9.4" rx="0.8" fill="#68aa42"/><rect x="1.8" y="2" width="4" height="3" fill="#fff"/><rect x="3.4" y="4" width="4.8" height="4" fill="#68aa42" stroke="#fff" stroke-width="0.9"/></svg>
<div class="t" style="left:64.1px;top:262.1px">Planes</div>
<svg style="left:65.6px;top:273.7px" width="10" height="10" viewBox="0 0 10 10"><rect x="0.3" y="0.3" width="9.4" height="9.4" rx="0.8" fill="#68aa42"/><rect x="2.2" y="3" width="5.6" height="4" fill="#fff"/></svg>
<div class="t" style="left:77.7px;top:273.7px">Plane 1</div>
<div class="cb" style="left:230px;top:273.7px"></div>
<svg style="left:43.3px;top:287.4px" width="5" height="6" viewBox="0 0 5 6"><path d="M1 0.6L3.8 3L1 5.4Z" fill="#444"/></svg>
<svg style="left:52.0px;top:285.2px" width="10" height="10" viewBox="0 0 10 10"><rect x="0.3" y="0.3" width="9.4" height="9.4" rx="0.8" fill="#68aa42"/><circle cx="3.3" cy="3.3" r="1.5" fill="none" stroke="#fff" stroke-width="1.1"/><circle cx="5.9" cy="6" r="2.1" fill="#68aa42" stroke="#fff" stroke-width="1.3"/></svg>
<div class="t" style="left:64.1px;top:285.2px">Circles</div>
<svg style="left:42.8px;top:299.2px" width="5" height="5" viewBox="0 0 5 5"><path d="M0.4 1.2H4.6L2.5 4Z" fill="#444"/></svg>
<svg style="left:52.0px;top:296.8px" width="10" height="10" viewBox="0 0 10 10"><rect x="0.3" y="0.3" width="9.4" height="9.4" rx="0.8" fill="#68aa42"/><path d="M3.6 2.4L5.2 6H2Z" fill="#fff"/><path d="M6.2 3.6L8.4 8H4Z" fill="#fff" stroke="#68aa42" stroke-width="0.4"/></svg>
<div class="t" style="left:64.1px;top:296.8px">Cones</div>
<svg style="left:65.6px;top:308.4px" width="10" height="10" viewBox="0 0 10 10"><rect x="0.3" y="0.3" width="9.4" height="9.4" rx="0.8" fill="#68aa42"/><path d="M5 2.2L7.6 7.8H2.4Z" fill="#fff"/></svg>
<div class="t" style="left:77.7px;top:308.4px">Cone 1</div>
<div class="cb" style="left:230px;top:308.4px"></div>
<svg style="left:16.1px;top:322.2px" width="5" height="6" viewBox="0 0 5 6"><path d="M1 0.6L3.8 3L1 5.4Z" fill="#444"/></svg>
<svg style="left:24.8px;top:320.0px" width="10" height="10" viewBox="0 0 10 10"><path d="M1.4 1.2H8.8V8.8 M8.6 1.4L3.4 6.6" fill="none" stroke="#333" stroke-width="1.2"/><rect x="2.6" y="5.6" width="2" height="2" fill="#222"/></svg>
<div class="t" style="left:36.9px;top:320.0px">Alignments</div>
<svg style="left:209.6px;top:76.6px" width="10" height="10" viewBox="0 0 9 9"><path d="M1 8L1.6 5.8L6.4 1L8 2.6L3.2 7.4Z" fill="#3a3a3a"/><path d="M5.6 1.8L7.2 3.4" stroke="#fff" stroke-width="0.5"/></svg>
<div class="hl" style="left:0;top:330px;width:248px"></div>
<svg style="left:2.5px;top:334.7px" width="5" height="6" viewBox="0 0 5 6"><path d="M1 0.6L3.8 3L1 5.4Z" fill="#444"/></svg>
<svg style="left:11.2px;top:332.5px" width="10" height="10" viewBox="0 0 10 10"><path d="M1 1.6H5L9.4 6L6 9.4L1 5Z" fill="none" stroke="#444" stroke-width="0.9"/><path d="M2.4 0.6H6.2L9.8 4.2" fill="none" stroke="#444" stroke-width="0.8"/><circle cx="3" cy="3.6" r="0.7" fill="#444"/></svg>
<div class="t" style="left:23.3px;top:332.5px">Tags</div>
<div class="hl" style="left:0;top:343.8px;width:248px"></div>
<div class="hl" style="left:0;top:361px;width:248px"></div>
<div class="abs" style="left:103.3px;top:363.3px;width:37.8px;height:4.6px;background:#dbe0ec"></div>
<div class="abs" style="left:0;top:369.6px;width:248px;height:18px;background:#edf0f8"></div>
<div class="abs" style="left:0;top:370.4px;width:57px;height:17.2px;background:#fff"></div>
<div class="t" style="left:3px;top:374.2px;color:#3f6fe0">Relates To</div>
<svg style="left:45.6px;top:376.2px" width="6.4" height="6.4" viewBox="0 0 6.4 6.4"><path d="M0.6 0.6L5.8 5.8M5.8 0.6L0.6 5.8" stroke="#444" stroke-width="1.15"/></svg>
<svg style="left:65.0px;top:375.6px" width="7.4" height="7.4" viewBox="0 0 7.4 7.4"><path d="M3.7 0.2V7.2M0.2 3.7H7.2" stroke="#333" stroke-width="1.2"/></svg>
<svg style="left:209.3px;top:394.4px" width="5" height="6" viewBox="0 0 5 6"><path d="M0.6 0.6L2.5 2.5L4.4 0.6 M0.6 3.2L2.5 5.1L4.4 3.2" fill="none" stroke="#444" stroke-width="0.9"/></svg>
<svg style="left:234.7px;top:394.4px" width="5" height="6" viewBox="0 0 5 6"><path d="M0.6 2.6L2.5 0.7L4.4 2.6 M0.6 5.2L2.5 3.3L4.4 5.2" fill="none" stroke="#444" stroke-width="0.9"/></svg>
<div class="hl" style="left:0;top:404px;width:248px"></div>
<svg style="left:2.0px;top:409.6px" width="5" height="5" viewBox="0 0 5 5"><path d="M0.4 1.2H4.6L2.5 4Z" fill="#444"/></svg>
<svg style="left:11.2px;top:407.2px" width="10" height="10" viewBox="0 0 10 10"><path d="M2 0.4V8.6L4.1 6.7L5.6 9.8L7 9.1L5.5 6.1H8.2Z" fill="#222"/></svg>
<div class="t" style="left:23.3px;top:407.2px;transform:scaleX(0.911)">Chosen Elements (1)</div>
<div class="hl" style="left:0;top:418px;width:248px"></div>
<svg style="left:15.6px;top:421.9px" width="5" height="5" viewBox="0 0 5 5"><path d="M0.4 1.2H4.6L2.5 4Z" fill="#444"/></svg>
<svg style="left:24.8px;top:419.5px" width="10" height="10" viewBox="0 0 10 10"><path d="M3.4 0.9H9.4V9.5H0.7V3.2" fill="none" stroke="#6a6a6a" stroke-width="0.85"/><rect x="0.2" y="0.2" width="2.6" height="2.6" fill="#222"/></svg>
<div class="t" style="left:36.9px;top:419.5px">Part</div>
<svg style="left:29.2px;top:433.8px" width="5" height="5" viewBox="0 0 5 5"><path d="M0.4 1.2H4.6L2.5 4Z" fill="#444"/></svg>
<svg style="left:38.4px;top:431.4px" width="10" height="10" viewBox="0 0 10 10"><path d="M0.7 3V8.7H9.5V3H5V1.8H1.4V3Z M1.4 3H5" fill="none" stroke="#666" stroke-width="0.85"/></svg>
<div class="t" style="left:50.5px;top:431.4px">Actual Elements</div>
<svg style="left:42.8px;top:445.6px" width="5" height="5" viewBox="0 0 5 5"><path d="M0.4 1.2H4.6L2.5 4Z" fill="#444"/></svg>
<svg style="left:52.0px;top:443.2px" width="10" height="10" viewBox="0 0 10 10"><rect x="0.3" y="0.3" width="9.4" height="9.4" rx="0.8" fill="#68aa42"/><path d="M3 2.2H7.6V7.6H3Z" fill="none" stroke="#fff" stroke-width="1"/><rect x="1.6" y="3.6" width="3" height="3" fill="#fff"/></svg>
<div class="t" style="left:64.1px;top:443.2px;transform:scaleX(0.942)">Fitting Elements</div>
<svg style="left:56.4px;top:457.2px" width="5" height="5" viewBox="0 0 5 5"><path d="M0.4 1.2H4.6L2.5 4Z" fill="#444"/></svg>
<svg style="left:65.6px;top:454.8px" width="10" height="10" viewBox="0 0 10 10"><rect x="0.3" y="0.3" width="9.4" height="9.4" rx="0.8" fill="#68aa42"/><circle cx="3.3" cy="3.3" r="1.5" fill="none" stroke="#fff" stroke-width="1.1"/><circle cx="5.9" cy="6" r="2.1" fill="#68aa42" stroke="#fff" stroke-width="1.3"/></svg>
<div class="t" style="left:77.7px;top:454.8px">Circles</div>
<div class="abs" style="left:79.0px;top:465.8px;width:169.0px;height:11.2px;background:#c9cbd4"></div>
<svg style="left:79.2px;top:466.4px" width="10" height="10" viewBox="0 0 10 10"><rect x="0.3" y="0.3" width="9.4" height="9.4" rx="0.8" fill="#68aa42"/><circle cx="5" cy="5" r="2.3" fill="none" stroke="#fff" stroke-width="1.3"/></svg>
<div class="t" style="left:91.3px;top:466.4px">Lower Seal 1</div>
<svg style="left:210.7px;top:468.0px" width="7" height="7" viewBox="0 0 7 7"><circle cx="3.5" cy="3.5" r="3.1" fill="#d9363c"/><rect x="1.6" y="2.8" width="3.8" height="1.4" fill="#fff"/></svg>
<div class="abs" style="left:230.6px;top:466.8px;width:9px;height:9px;background:#fff"></div>
<div class="hl" style="left:0;top:477.3px;width:248px"></div>
<svg style="left:2.0px;top:481.2px" width="5" height="5" viewBox="0 0 5 5"><path d="M0.4 1.2H4.6L2.5 4Z" fill="#444"/></svg>
<svg style="left:11.2px;top:478.8px" width="10" height="10" viewBox="0 0 10 10"><rect x="3.2" y="0.4" width="4" height="3.4" fill="#333"/><rect x="0.2" y="6" width="3.6" height="3.4" fill="#333"/><rect x="6.2" y="6" width="3.6" height="3.4" fill="#333"/><path d="M5.2 3.8V5H2V6 M5.2 5H8V6" stroke="#333" stroke-width="0.8" fill="none"/></svg>
<div class="t" style="left:23.3px;top:478.8px">Related Elements</div>
<div class="hl" style="left:0;top:490.3px;width:248px"></div>
<svg style="left:15.6px;top:494.0px" width="5" height="5" viewBox="0 0 5 5"><path d="M0.4 1.2H4.6L2.5 4Z" fill="#444"/></svg>
<svg style="left:24.8px;top:491.6px" width="10" height="10" viewBox="0 0 10 10"><path d="M3.4 0.9H9.4V9.5H0.7V3.2" fill="none" stroke="#6a6a6a" stroke-width="0.85"/><rect x="0.2" y="0.2" width="2.6" height="2.6" fill="#222"/></svg>
<div class="t" style="left:36.9px;top:491.6px">Part</div>
<svg style="left:38.4px;top:503.4px" width="10" height="10" viewBox="0 0 10 10"><path d="M3.6 0.4H8.8V4.6H9.6V9H5V9.4H0.6V5H1.4V1.2H3.6Z" fill="#68aa42"/><rect x="0.6" y="5" width="4.2" height="4.4" fill="#8fcb62"/><path d="M4.9 1V9 M1.4 5H9.2" stroke="#b5e090" stroke-width="0.45" fill="none"/></svg>
<div class="t" style="left:50.5px;top:503.4px">Mesh (HL-10oz&nbsp; Vessel(White))</div>
<div class="cb" style="left:230px;top:503.4px"></div>
<svg style="left:231.2px;top:504.4px" width="8" height="8" viewBox="0 0 8 8"><path d="M0.6 4Q4 0.6 7.4 4Q4 7.4 0.6 4Z" fill="#fff" stroke="#777" stroke-width="0.8"/><circle cx="4" cy="4" r="1.5" fill="#505050"/></svg>
<div class="t" style="left:257.3px;top:12.6px;color:#3f6fe0;transform:scaleX(0.803)">PIP</div>
<svg style="left:276.2px;top:14.8px" width="6.4" height="6.4" viewBox="0 0 6.4 6.4"><path d="M0.6 0.6L5.8 5.8M5.8 0.6L0.6 5.8" stroke="#444" stroke-width="1.15"/></svg>
<div class="t" style="left:294px;top:12.6px">Table</div>
<div class="t" style="left:337.8px;top:12.6px">Diagram</div>
<div class="t" style="left:393.3px;top:12.6px">Section View</div>
<svg style="left:465.9px;top:14.2px" width="7.4" height="7.4" viewBox="0 0 7.4 7.4"><path d="M3.7 0.2V7.2M0.2 3.7H7.2" stroke="#333" stroke-width="1.2"/></svg>
</div>
</body></html>
